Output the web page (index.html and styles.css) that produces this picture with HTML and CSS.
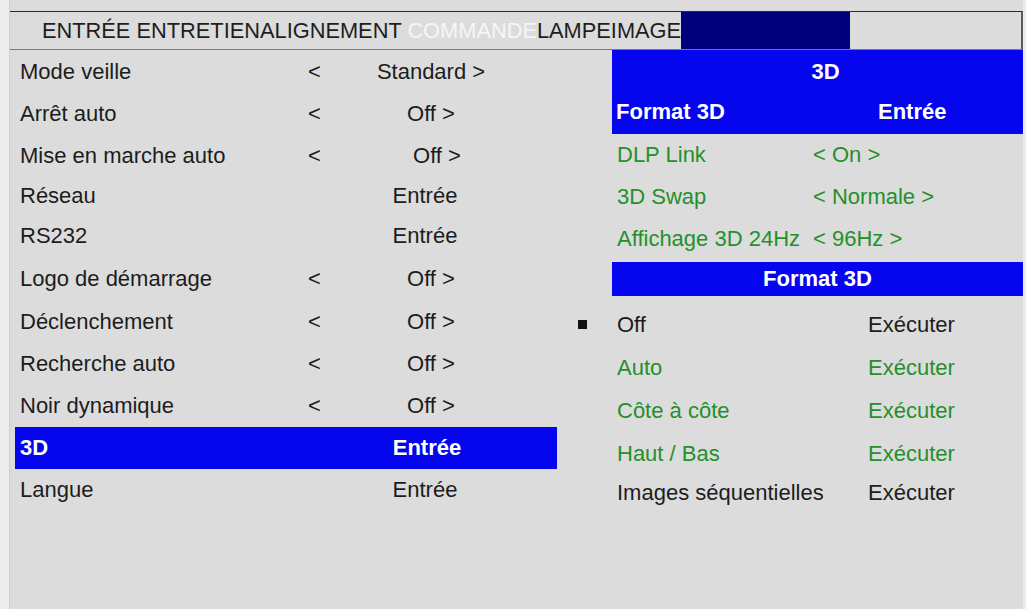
FILE: index.html
```html
<!DOCTYPE html>
<html lang="fr">
<head>
    <meta charset="UTF-8">
    <meta name="viewport" content="width=device-width, initial-scale=1.0">
    <title>Menu projecteur</title>
    <link rel="stylesheet" href="styles.css">
</head>
<body>
    <div class="screen">
        <div class="tabs">
            <span class="tab">ENTRÉE </span><span class="tab">ENTRETIEN</span><span class="tab">ALIGNEMENT </span><span class="tab active">COMMANDE</span><span class="tab">LAMPE</span><span class="tab">IMAGE</span>
            <span class="tab-fill"></span>
        </div>

        <div class="menu">
            <!-- main settings list -->
            <div class="main-list">
                <div class="row"><span class="label">Mode veille</span><span class="arrow">&lt;</span><span class="value">Standard &gt;</span></div>
                <div class="row"><span class="label">Arrêt auto</span><span class="arrow">&lt;</span><span class="value">Off &gt;</span></div>
                <div class="row"><span class="label">Mise en marche auto</span><span class="arrow">&lt;</span><span class="value nudge">Off &gt;</span></div>
                <div class="row short"><span class="label">Réseau</span><span class="arrow"></span><span class="value enter">Entrée</span></div>
                <div class="row"><span class="label">RS232</span><span class="arrow"></span><span class="value enter">Entrée</span></div>
                <div class="row tall"><span class="label">Logo de démarrage</span><span class="arrow">&lt;</span><span class="value">Off &gt;</span></div>
                <div class="row"><span class="label">Déclenchement</span><span class="arrow">&lt;</span><span class="value">Off &gt;</span></div>
                <div class="row"><span class="label">Recherche auto</span><span class="arrow">&lt;</span><span class="value">Off &gt;</span></div>
                <div class="row"><span class="label">Noir dynamique</span><span class="arrow">&lt;</span><span class="value">Off &gt;</span></div>
                <div class="row selected"><span class="label">3D</span><span class="arrow"></span><span class="value enter">Entrée</span></div>
                <div class="row"><span class="label">Langue</span><span class="arrow"></span><span class="value enter">Entrée</span></div>
            </div>

            <!-- 3D submenu -->
            <div class="sub-panel">
                <div class="sub-head">
                    <div class="sub-title">3D</div>
                    <div class="sub-row"><span class="sub-label">Format 3D</span><span class="sub-enter">Entrée</span></div>
                </div>
                <div class="opt-row"><span class="opt-label">DLP Link</span><span>&lt; On &gt;</span></div>
                <div class="opt-row"><span class="opt-label">3D Swap</span><span>&lt; Normale &gt;</span></div>
                <div class="opt-row"><span class="opt-label">Affichage 3D 24Hz</span><span>&lt; 96Hz &gt;</span></div>

                <div class="format-bar">Format 3D</div>

                <div class="fmt-row current"><span class="mark"></span><span class="fmt-label">Off</span><span>Exécuter</span></div>
                <div class="fmt-row green"><span class="mark"></span><span class="fmt-label">Auto</span><span>Exécuter</span></div>
                <div class="fmt-row green"><span class="mark"></span><span class="fmt-label">Côte à côte</span><span>Exécuter</span></div>
                <div class="fmt-row green"><span class="mark"></span><span class="fmt-label">Haut / Bas</span><span>Exécuter</span></div>
                <div class="fmt-row last"><span class="mark"></span><span class="fmt-label">Images séquentielles</span><span>Exécuter</span></div>
            </div>
        </div>
    </div>
</body>
</html>
```

FILE: styles.css
```css
body {
    margin: 0;
    padding: 0;
    background-color: #ededed;
    font-family: "Liberation Sans", Arial, sans-serif;
    color: #1c1c1c;
}
.screen {
    margin-left: 9px;
    width: 1014px;
    height: 609px;
    padding-top: 11px;
    box-sizing: border-box;
    background-color: #dcdcdc;
    border-left: 1px solid #cfcfcf;
}

/* top tab strip */
.tabs {
    display: flex;
    align-items: stretch;
    height: 37px;
    padding-left: 32px;
    border-top: 1px solid #2b2b2b;
    border-bottom: 1px solid #7a7a7a;
    border-right: 2px solid #5a5a5a;
    font-size: 21.8px;
    line-height: 37px;
    white-space: pre;
}
.tab {
    color: #1e1e1e;
}
.tab.active {
    color: #f6f6f6;
}
.tab-fill {
    width: 169px;
    background-color: #00007d;
}

.menu {
    display: flex;
    font-size: 22px;
}

/* left list */
.main-list {
    margin-left: 5px;
    width: 542px;
    padding-top: 1px;
}
.row {
    display: grid;
    grid-template-columns: 288px 40px 166px;
    align-items: center;
    height: 42px;
    padding-left: 5px;
    white-space: nowrap;
}
.row.short {
    height: 38px;
}
.row.tall {
    height: 44px;
}
.row .value {
    text-align: center;
}
.row .value.enter {
    position: relative;
    left: -6px;
}
.row .value.nudge {
    position: relative;
    left: 6px;
}
.row.selected {
    background-color: #0505ee;
    color: #fff;
    font-weight: bold;
}
.row.selected .value.enter {
    left: -4px;
}

/* right submenu */
.sub-panel {
    width: 463px;
    margin-left: 3px;
    white-space: nowrap;
}
.sub-head {
    margin-left: 52px;
    height: 84px;
    background-color: #0505ee;
    color: #fff;
    font-weight: bold;
}
.sub-title {
    height: 42px;
    line-height: 44px;
    text-align: center;
    padding-left: 16px;
}
.sub-row {
    display: flex;
    height: 42px;
    line-height: 40px;
    padding-left: 4px;
}
.sub-label {
    width: 262px;
}
.opt-row {
    display: flex;
    align-items: center;
    height: 42px;
    padding-left: 57px;
    color: #24902b;
}
.opt-row:first-of-type {
    height: 44px;
}
.opt-label {
    width: 196px;
}
.format-bar {
    margin: 2px 0 7px 52px;
    height: 34px;
    line-height: 34px;
    background-color: #0505ee;
    color: #fff;
    font-weight: bold;
    text-align: center;
}
.fmt-row {
    display: flex;
    align-items: center;
    height: 43px;
    padding-left: 18px;
}
.fmt-row.last {
    height: 36px;
}
.fmt-row.green {
    color: #24902b;
}
.mark {
    width: 9px;
    height: 9px;
    margin-right: 30px;
}
.fmt-row.current .mark {
    background-color: #111;
}
.fmt-label {
    width: 251px;
}
```
